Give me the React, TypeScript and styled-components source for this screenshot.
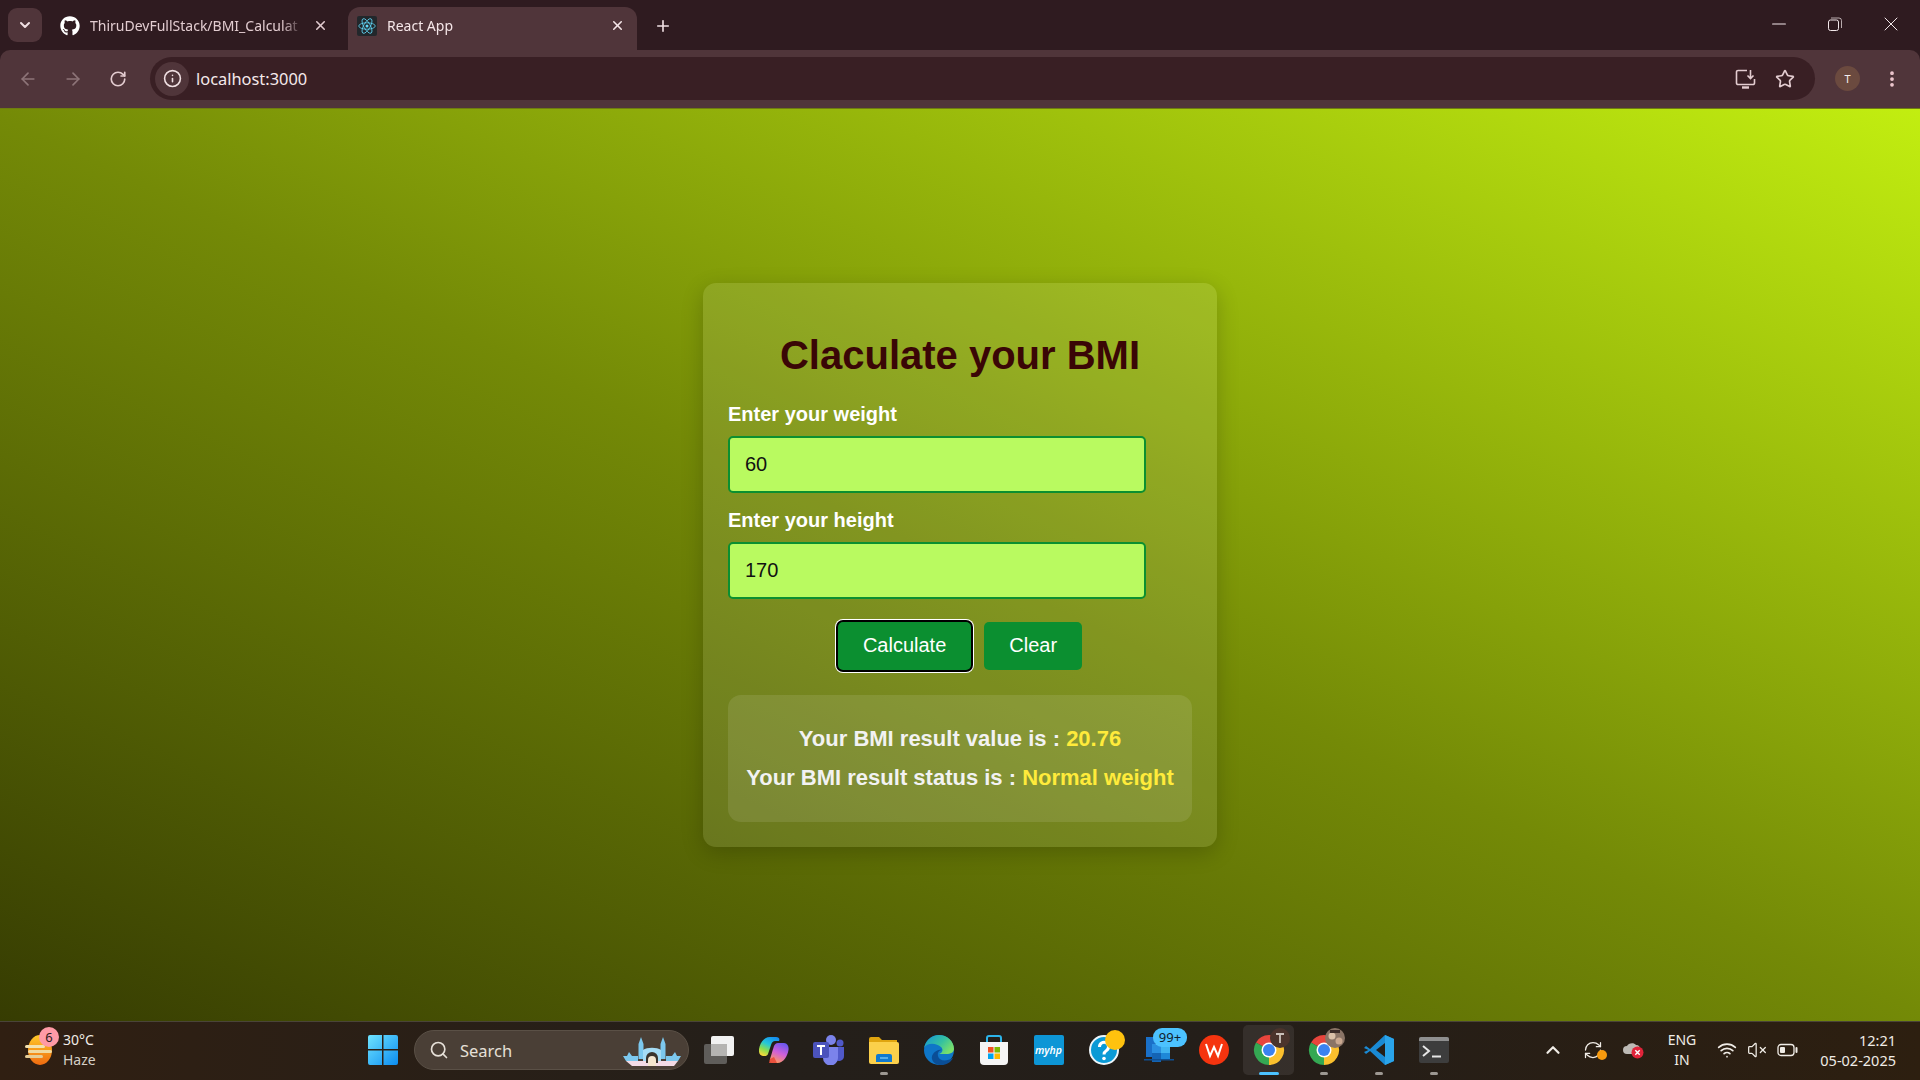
import React from "react";
import styled, { createGlobalStyle } from "styled-components";
import { ArrowLeft, ArrowRight, ChevronDown, ChevronUp, EllipsisVertical, Info, Minus, Plus, RefreshCw, RotateCw, Search, Star, VolumeX, Wifi, X } from "lucide-react";
import { FaGithub } from "react-icons/fa";

const GlobalStyle = createGlobalStyle`
  html, body {
    margin: 0;
    padding: 0;
    height: 100%;
    overflow: hidden;
    background: #2f1b20;
  }
`;

const Screen = styled.div`
  width: 1920px;
  height: 1080px;
  display: flex;
  flex-direction: column;
  font-family: "Noto Sans", "Open Sans", sans-serif;
`;

/* browser chrome */
const TabStrip = styled.div`
  height: 50px;
  flex: none;
  display: flex;
  align-items: flex-end;
  padding-left: 8px;
  background: #2f1b20;
  color: #f0dfe2;
`;

const TabSearch = styled.div`
  width: 34px;
  height: 34px;
  margin: 0 0 8px;
  border-radius: 9px;
  background: #50353a;
  display: flex;
  align-items: center;
  justify-content: center;
`;

const Tab = styled.div<{ $active?: boolean }>`
  width: ${(p) => (p.$active ? "289px" : "306px")};
  height: 43px;
  box-sizing: border-box;
  display: flex;
  align-items: center;
  padding: 0 ${(p) => (p.$active ? "12px" : "20px")} 6px ${(p) => (p.$active ? "9px" : "18px")};
  gap: 10px;
  font-size: 14px;
  border-radius: 12px 12px 0 0;
  background: ${(p) => (p.$active ? "#50353a" : "transparent")};
  color: ${(p) => (p.$active ? "#f5e6e8" : "#e2ccd0")};
`;

const TabTitle = styled.span`
  flex: 1;
  white-space: nowrap;
  mask-image: linear-gradient(to right, #000 90%, transparent);
`;

const Favicon = styled.div`
  width: 20px;
  height: 20px;
  background: #22272b;
  border-radius: 2px;
  display: flex;
  align-items: center;
  justify-content: center;
`;

const NewTab = styled.div`
  width: 52px;
  height: 43px;
  padding-bottom: 6px;
  box-sizing: border-box;
  display: flex;
  align-items: center;
  justify-content: center;
`;

const WindowControls = styled.div`
  margin-left: auto;
  align-self: flex-start;
  display: flex;
  height: 48px;
  align-items: center;
  padding-right: 1px;
`;

const WindowButton = styled.div`
  width: 56px;
  display: flex;
  justify-content: center;
  color: #f3e8ea;
`;

const Toolbar = styled.div`
  height: 58px;
  flex: none;
  display: flex;
  align-items: center;
  padding: 0 0 1px 5px;
  box-sizing: border-box;
  background: #50353a;
  border-radius: 10px 10px 0 0;
  color: #e3ccd0;
`;

const NavButton = styled.div<{ $dim?: boolean }>`
  width: 45px;
  display: flex;
  justify-content: center;
  color: ${(p) => (p.$dim ? "#8d7478" : "#e3ccd0")};
`;

const Omnibox = styled.div`
  width: 1665px;
  height: 43px;
  margin-left: 10px;
  flex: none;
  box-sizing: border-box;
  border-radius: 22px;
  background: #391f24;
  display: flex;
  align-items: center;
  padding: 0 20px 0 5px;
`;

const SiteInfo = styled.div`
  width: 34px;
  height: 34px;
  border-radius: 50%;
  background: #50353a;
  display: flex;
  align-items: center;
  justify-content: center;
`;

const Url = styled.span`
  margin-left: 7px;
  font-size: 16.4px;
  color: #f5e9eb;
`;

const OmniActions = styled.div`
  margin-left: auto;
  display: flex;
  align-items: center;
  gap: 19px;
`;

const Avatar = styled.div`
  width: 25px;
  height: 25px;
  margin-left: 20px;
  border-radius: 50%;
  background: #6b4a3f;
  color: #f4eeee;
  font-size: 11px;
  display: flex;
  align-items: center;
  justify-content: center;
`;

const MenuButton = styled.div`
  margin-left: 22px;
  display: flex;
  color: #f0c9d0;
`;

/* the page itself */
const Page = styled.main`
  flex: 1;
  border-top: 1px solid #6f7d10;
  display: flex;
  align-items: center;
  justify-content: center;
  background: linear-gradient(25deg, #363c02 0%, #748a07 50%, #c2ee10 100%);
  font-family: "Liberation Sans", Arial, sans-serif;
`;

const Card = styled.section`
  width: 514px;
  height: 564px;
  box-sizing: border-box;
  padding: 25px;
  border-radius: 13px;
  background: rgba(255, 255, 255, 0.1);
  box-shadow: 0 6px 22px rgba(0, 0, 0, 0.2);
`;

const Title = styled.h1`
  margin: 24px 0 24px;
  text-align: center;
  font-size: 40px;
  line-height: 46px;
  font-weight: 700;
  color: #3a0606;
`;

const FieldLabel = styled.label`
  display: block;
  font-size: 20px;
  line-height: 24px;
  font-weight: 700;
  color: #fff;
  margin-bottom: 10px;
`;

const FieldInput = styled.input`
  display: block;
  width: 418px;
  height: 57px;
  box-sizing: border-box;
  padding: 0 15px;
  margin-bottom: 15px;
  border: 2px solid #0b8f30;
  border-radius: 5px;
  background: #b9fa60;
  color: #111;
  font-family: inherit;
  font-size: 20px;
  outline: none;
`;

const Buttons = styled.div`
  margin-top: 23px;
  display: flex;
  justify-content: center;
  gap: 13px;
`;

const ActionButton = styled.button<{ $focused?: boolean }>`
  height: 48px;
  padding: 0 25px 2px;
  border: none;
  border-radius: 5px;
  background: #0b8f30;
  color: #fff;
  font-family: inherit;
  font-size: 20px;
  box-shadow: ${(p) => (p.$focused ? "0 0 0 2px #000, 0 0 0 3px #fff" : "none")};
`;

const ResultBox = styled.div`
  margin-top: 25px;
  height: 127px;
  box-sizing: border-box;
  padding-top: 31px;
  border-radius: 13px;
  background: rgba(255, 255, 255, 0.1);
  text-align: center;
`;

const ResultLine = styled.p`
  margin: 0 0 14px;
  font-size: 22px;
  line-height: 25px;
  font-weight: 700;
  color: #f2f2f2;
`;

const ResultValue = styled.span`
  color: #ffeb3b;
`;

/* windows taskbar */
const Taskbar = styled.footer`
  height: 59px;
  flex: none;
  display: flex;
  align-items: center;
  box-sizing: border-box;
  padding-bottom: 2px;
  border-top: 1px solid #4a4438;
  background: linear-gradient(to right, #301f12, #241f1a 40%, #241e19 65%, #2d1f10);
  color: #f0ece6;
`;

const Weather = styled.div`
  width: 355px;
  flex: none;
  box-sizing: border-box;
  padding-left: 24px;
  display: flex;
  align-items: center;
  gap: 9px;
`;

const WeatherIcon = styled.div`
  position: relative;
  width: 30px;
  height: 34px;
`;

const CountBadge = styled.span`
  position: absolute;
  top: -6px;
  left: 15px;
  width: 20px;
  height: 20px;
  border-radius: 50%;
  background: #ff9aa6;
  color: #2b1a1a;
  font-size: 13px;
  display: flex;
  align-items: center;
  justify-content: center;
`;

const WeatherText = styled.div`
  font-size: 14px;
  line-height: 20px;
`;

const WeatherHaze = styled.div`
  color: #d5cfc6;
`;

const Slot = styled.div<{ $active?: boolean; $running?: boolean }>`
  position: relative;
  width: 55px;
  height: 50px;
  flex: none;
  display: flex;
  align-items: center;
  justify-content: center;
  &::before {
    content: "";
    position: absolute;
    inset: 0 2px;
    border-radius: 5px;
    background: ${(p) => (p.$active ? "rgba(255,255,255,0.08)" : "transparent")};
  }
  &::after {
    content: "";
    display: ${(p) => (p.$active || p.$running ? "block" : "none")};
    position: absolute;
    bottom: 0;
    left: 50%;
    transform: translateX(-50%);
    width: ${(p) => (p.$active ? "20px" : "8px")};
    height: 3px;
    border-radius: 2px;
    background: ${(p) => (p.$active ? "#4cc2ff" : "#9d9892")};
  }
`;

const SearchBox = styled.div`
  position: relative;
  width: 275px;
  height: 40px;
  flex: none;
  margin: 0 2px 0 4px;
  box-sizing: border-box;
  border-radius: 20px;
  border: 1px solid #5a5046;
  background: #4a3f36;
  display: flex;
  align-items: center;
  padding-left: 14px;
  gap: 11px;
  font-size: 16.5px;
  color: #e6e0d8;
`;

const Mosque = styled.svg`
  position: absolute;
  right: 7px;
  bottom: 3px;
`;

const IconBadge = styled.span`
  position: absolute;
  top: 3px;
  left: 22px;
  width: 34px;
  height: 19px;
  border-radius: 9px;
  background: #4cc2ff;
  color: #10202c;
  font-size: 13px;
  line-height: 19px;
  text-align: center;
  z-index: 1;
`;

const MyHp = styled.div`
  position: relative;
  width: 30px;
  height: 30px;
  border-radius: 2px;
  background: #0d96d6;
  color: #fff;
  font-size: 10.5px;
  font-style: italic;
  font-weight: 600;
  display: flex;
  align-items: center;
  justify-content: center;
`;

const Tray = styled.div`
  margin-left: auto;
  display: flex;
  align-items: center;
  padding-right: 24px;
`;

const TrayIcon = styled.div<{ $width: number }>`
  position: relative;
  width: ${(p) => p.$width}px;
  display: flex;
  justify-content: center;
`;

const Lang = styled.div`
  width: 44px;
  margin: 0 8px 0 7px;
  text-align: center;
  font-size: 14px;
  line-height: 20px;
`;

const Clock = styled.div`
  width: 88px;
  margin-left: 6px;
  text-align: right;
  font-size: 14.5px;
  line-height: 20px;
`;

const OverflowSvg = styled.svg`
  overflow: visible;
  position: relative;
`;

const ReactLogo = () => (
  <svg width="18" height="18" viewBox="-12 -12 24 24" fill="none" stroke="#61dafb" strokeWidth="1">
    <circle r="2" fill="#61dafb" stroke="none" />
    <ellipse rx="11" ry="4.3" />
    <ellipse rx="11" ry="4.3" transform="rotate(60)" />
    <ellipse rx="11" ry="4.3" transform="rotate(120)" />
  </svg>
);

const RestoreIcon = () => (
  <svg width="14" height="14" viewBox="0 0 14 14" fill="none" stroke="currentColor" strokeWidth="1">
    <rect x="0.5" y="3" width="10" height="10.5" rx="2" />
    <path d="M3 1h8a2.5 2.5 0 0 1 2.5 2.5V11" opacity="0.7" />
  </svg>
);

const InstallIcon = () => (
  <svg width="21" height="20" viewBox="0 0 21 20" fill="none" stroke="currentColor" strokeWidth="1.6">
    <path d="M12 1.5H3A1.5 1.5 0 0 0 1.5 3v11A1.5 1.5 0 0 0 3 15.5h15a1.5 1.5 0 0 0 1.5-1.5V10" />
    <path d="M7 18.5h7" strokeWidth="2.4" />
    <path d="M15.5 1v8M12.5 6.5l3 3 3-3" />
  </svg>
);

const BatteryIcon = () => (
  <svg width="21" height="14" viewBox="0 0 21 14" fill="none" stroke="currentColor" strokeWidth="1.3">
    <rect x="1" y="1.5" width="16" height="11" rx="3" />
    <rect x="3" y="4" width="5" height="6" rx="1" fill="currentColor" stroke="none" />
    <path d="M19.5 5v4" strokeWidth="2" strokeLinecap="round" />
  </svg>
);

const WeatherArt = () => (
  <svg width="30" height="34" viewBox="0 0 30 34">
    <defs>
      <linearGradient id="sun" x1="0" y1="0" x2="0" y2="1">
        <stop offset="0" stopColor="#ffc928" />
        <stop offset="1" stopColor="#ef6a10" />
      </linearGradient>
    </defs>
    <ellipse cx="16" cy="17" rx="12" ry="15" fill="url(#sun)" />
    <rect x="1" y="12" width="20" height="3" rx="1.5" fill="#f3e2ae" />
    <rect x="4" y="17" width="24" height="3" rx="1.5" fill="#f0d9a0" />
    <rect x="1" y="22" width="18" height="3" rx="1.5" fill="#e6cd96" />
  </svg>
);

const WindowsLogo = () => (
  <svg width="30" height="30" viewBox="0 0 30 30">
    <defs>
      <linearGradient id="win" x1="0" y1="0" x2="1" y2="1">
        <stop offset="0" stopColor="#6fe4ff" />
        <stop offset="1" stopColor="#0c8cf0" />
      </linearGradient>
    </defs>
    <path d="M0 2a2 2 0 0 1 2-2h12v14H0zM15.5 0H28a2 2 0 0 1 2 2v12H15.5zM0 15.5h14V30H2a2 2 0 0 1-2-2zM15.5 15.5H30V28a2 2 0 0 1-2 2H15.5z" fill="url(#win)" />
  </svg>
);

const MosqueArt = () => (
  <Mosque width="58" height="30" viewBox="0 0 58 30">
    <path d="M18 1l2.500 7v15h-5V8zM40 1l2.500 7v15h-5V8z" fill="#7cc8ee" />
    <path d="M20 14c4-3 14-3 18 0v11H20z" fill="#a5dcf5" />
    <path d="M0 20h4l2-4 3 4h6v5H3zM58 20h-4l-2-4-3 4h-6v5h12z" fill="#7cc8ee" />
    <path d="M3 25h52l-4 5H9z" fill="#f3dbe6" />
    <path d="M23 27v-5a6 6 0 0 1 12 0v5z" fill="#3a332c" />
    <path d="M25 30v-6a4 4 0 0 1 8 0v6z" fill="#f5e6cf" />
  </Mosque>
);

const TaskViewIcon = () => (
  <svg width="30" height="30" viewBox="0 0 30 30">
    <rect x="0" y="9" width="23" height="20" rx="2" fill="#5f5d5a" />
    <rect x="7" y="1" width="23" height="20" rx="2" fill="#f2f2f2" />
    <rect x="7" y="9" width="16" height="12" fill="#b5b4b2" />
  </svg>
);

const CopilotIcon = () => (
  <svg width="30" height="26" viewBox="0 0 30 26">
    <defs>
      <linearGradient id="copA" x1="0.7" y1="0" x2="0.2" y2="1">
        <stop offset="0" stopColor="#1690f0" />
        <stop offset="0.4" stopColor="#24c8d8" />
        <stop offset="0.7" stopColor="#8ade50" />
        <stop offset="1" stopColor="#ffd83a" />
      </linearGradient>
      <linearGradient id="copB" x1="0.7" y1="0" x2="0.3" y2="1">
        <stop offset="0" stopColor="#6a58f0" />
        <stop offset="0.5" stopColor="#d060d8" />
        <stop offset="1" stopColor="#ff9a5a" />
      </linearGradient>
    </defs>
    <path d="M11 0h6c3 0 4 2 3 4H16c-2 0-3 1-4 4l-3 9c-.5 1.5-2 2-3 2H4c-3 0-4.500-3-4-7C1 6 5 0 11 0z" fill="url(#copA)" />
    <path d="M11 22l4-13c.5-1.500 2-3 4-3h6c3 0 5 3 4.500 7-1 6-5 13-11 13h-5c-2.500 0-3-2-2.500-4z" fill="url(#copB)" />
    <path d="M11 22l-1 4h8l-3-6z" fill="#e84a3a" opacity="0.9" />
  </svg>
);

const TeamsIcon = () => (
  <svg width="32" height="30" viewBox="0 0 32 30">
    <circle cx="18" cy="5" r="5" fill="#7b83eb" />
    <circle cx="27" cy="8" r="3.5" fill="#5059c9" />
    <path d="M22 12h9v9a5 5 0 0 1-9 3z" fill="#5059c9" />
    <path d="M10 12h15v11a7.5 7.5 0 0 1-15 0z" fill="#7b83eb" />
    <rect x="0" y="7" width="16" height="16" rx="2" fill="#4b53bc" />
    <path d="M4 11h8M8 11v9" stroke="#fff" strokeWidth="2" />
  </svg>
);

const FolderIcon = () => (
  <svg width="30" height="28" viewBox="0 0 30 28">
    <path d="M0 3a2 2 0 0 1 2-2h8l3 3h15v6H0z" fill="#e0a50f" />
    <path d="M0 6h28a2 2 0 0 1 2 2v18a2 2 0 0 1-2 2H2a2 2 0 0 1-2-2z" fill="#fbd04b" />
    <path d="M7 26v-6a2 2 0 0 1 2-2h12a2 2 0 0 1 2 2v6z" fill="#1079cf" />
    <path d="M11 22h8" stroke="#6cc0f5" strokeWidth="1.5" />
  </svg>
);

const EdgeIcon = () => (
  <svg width="30" height="30" viewBox="0 0 30 30">
    <defs>
      <linearGradient id="edgeA" x1="0" y1="0" x2="1" y2="0.6">
        <stop offset="0" stopColor="#1494d8" />
        <stop offset="0.6" stopColor="#35c1a0" />
        <stop offset="1" stopColor="#7ae06a" />
      </linearGradient>
    </defs>
    <circle cx="15" cy="15" r="15" fill="#0f76c8" />
    <path d="M0 13C2 5 8 0 15 0c8 0 15 6 15 14 0 3-3 5-8 5h-7c3-1 5-4 2-7-4-4-14-5-17 1z" fill="url(#edgeA)" />
    <path d="M15 30c-6-1-9-7-6-11 2-3 6-5 9-4-2 0-5 2-4 6 1 5 8 6 15 2-2 4-7 8-14 7z" fill="#0a4e96" />
  </svg>
);

const StoreIcon = () => (
  <svg width="30" height="30" viewBox="0 0 30 30">
    <path d="M8 8V3a2 2 0 0 1 2-2h10a2 2 0 0 1 2 2v5" fill="none" stroke="#2cb4ea" strokeWidth="2" />
    <path d="M1 7h28v19a4 4 0 0 1-4 4H5a4 4 0 0 1-4-4z" fill="#f5f5f5" />
    <rect x="9" y="12" width="5.5" height="5.5" fill="#f25022" />
    <rect x="15.5" y="12" width="5.5" height="5.5" fill="#7fba00" />
    <rect x="9" y="18.5" width="5.5" height="5.5" fill="#00a4ef" />
    <rect x="15.5" y="18.5" width="5.5" height="5.5" fill="#ffb900" />
  </svg>
);

const HelpIcon = () => (
  <OverflowSvg width="30" height="30" viewBox="0 0 30 30">
    <circle cx="15" cy="15" r="14" fill="#0a9ad6" stroke="#eef6fa" strokeWidth="2" />
    <path d="M10.5 12a4.500 4.500 0 1 1 7 3.500c-2 1.300-2.500 2-2.500 4" fill="none" stroke="#fff" strokeWidth="3" />
    <circle cx="15" cy="23.500" r="1.800" fill="#fff" />
    <circle cx="26" cy="5" r="10" fill="#ffc20e" />
  </OverflowSvg>
);

const OutlookIcon = () => (
  <svg width="30" height="28" viewBox="0 0 30 28">
    <rect x="2" y="1" width="9" height="20" fill="#1a70c8" />
    <rect x="8" y="8" width="9" height="9" fill="#2a8fe0" />
    <rect x="17" y="8" width="9" height="9" fill="#40b4f0" />
    <rect x="8" y="17" width="9" height="9" fill="#1464b4" />
    <rect x="17" y="17" width="9" height="6" fill="#1e88d8" />
    <path d="M0 23h30v1.5H0z" fill="#0e4f92" />
  </svg>
);

const WpsIcon = () => (
  <svg width="30" height="30" viewBox="0 0 30 30">
    <circle cx="15" cy="15" r="15" fill="#f5340f" />
    <path d="M7 9l4 12 4-9 4 9 4-12" fill="none" stroke="#fff" strokeWidth="2" />
  </svg>
);

const ChromeIcon = ({ badge }: { badge: "letter" | "photo" }) => (
  <OverflowSvg width="30" height="30" viewBox="0 0 30 30">
    <path d="M15 15L2 7.5A15 15 0 0 1 28 7.5z" fill="#e8453c" />
    <path d="M15 15L28 7.5A15 15 0 0 1 15 30z" fill="#fbc02d" />
    <path d="M15 15L15 30A15 15 0 0 1 2 7.5z" fill="#34a853" />
    <circle cx="15" cy="15" r="7.5" fill="#fff" />
    <circle cx="15" cy="15" r="6" fill="#3b82f0" />
    <circle cx="26" cy="3" r="10" fill={badge === "letter" ? "#4b342c" : "#8a7466"} />
    {badge === "letter" ? (
      <path d="M22 -1h8M26 -1v9" stroke="#c9bfb8" strokeWidth="1.8" />
    ) : (
      <>
        <circle cx="23" cy="1" r="3.5" fill="#d9c0a8" />
        <circle cx="30" cy="6" r="3.5" fill="#c9a890" />
        <path d="M21 -5h10v3H21z" fill="#3a2c28" />
      </>
    )}
  </OverflowSvg>
);

const VsCodeIcon = () => (
  <svg width="30" height="30" viewBox="0 0 30 30">
    <path d="M21 0l9 4v22l-9 4L6 16l-4 3-2-2 4.500-2L0 13l2-2 4 3z" fill="#1a8ad4" />
    <path d="M21 0l9 4v22l-9 4z" fill="#2aa4ea" />
    <path d="M21 8l-9 7 9 7z" fill="#241e19" />
  </svg>
);

const TerminalIcon = () => (
  <svg width="30" height="26" viewBox="0 0 30 26">
    <rect width="30" height="26" rx="2" fill="#3d3d3d" />
    <path d="M0 2a2 2 0 0 1 2-2h26a2 2 0 0 1 2 2v2H0z" fill="#8f8f8f" />
    <path d="M4 9l6 5-6 5" fill="none" stroke="#e6e6e6" strokeWidth="2" />
    <path d="M13 19.5h9" stroke="#e6e6e6" strokeWidth="2" />
  </svg>
);

const SyncDot = styled.span`
  position: absolute;
  right: 6px;
  bottom: 0;
  width: 10px;
  height: 10px;
  border-radius: 50%;
  background: #f79a0e;
`;

const CloudIcon = () => (
  <svg width="21" height="18" viewBox="0 0 21 18">
    <path d="M4 13a4 4 0 0 1 0-8c1-3 7-4 9-1 3 0 4 2 4 4v5z" fill="#bdbab5" />
    <circle cx="14.5" cy="11.5" r="6" fill="#e0243a" />
    <path d="M12.3 9.3l4.400 4.400M16.700 9.300l-4.400 4.400" stroke="#fff" strokeWidth="1.4" />
  </svg>
);

const App = () => (
  <Screen>
    <GlobalStyle />
    <TabStrip>
      <TabSearch>
        <ChevronDown size={16} strokeWidth={3} />
      </TabSearch>
      <Tab>
        <FaGithub size={20} color="#fff" />
        <TabTitle>ThiruDevFullStack/BMI_Calculat</TabTitle>
        <X size={15} strokeWidth={2.5} />
      </Tab>
      <Tab $active>
        <Favicon>
          <ReactLogo />
        </Favicon>
        <TabTitle>React App</TabTitle>
        <X size={15} strokeWidth={2.5} />
      </Tab>
      <NewTab>
        <Plus size={18} strokeWidth={2.2} />
      </NewTab>
      <WindowControls>
        <WindowButton>
          <Minus size={22} strokeWidth={1.1} />
        </WindowButton>
        <WindowButton>
          <RestoreIcon />
        </WindowButton>
        <WindowButton>
          <X size={24} strokeWidth={1} />
        </WindowButton>
      </WindowControls>
    </TabStrip>
    <Toolbar>
      <NavButton $dim>
        <ArrowLeft size={20} />
      </NavButton>
      <NavButton $dim>
        <ArrowRight size={20} />
      </NavButton>
      <NavButton>
        <RotateCw size={18} strokeWidth={2.2} />
      </NavButton>
      <Omnibox>
        <SiteInfo>
          <Info size={19} color="#f0dfe2" />
        </SiteInfo>
        <Url>localhost:3000</Url>
        <OmniActions>
          <InstallIcon />
          <Star size={20} strokeWidth={2} />
        </OmniActions>
      </Omnibox>
      <Avatar>T</Avatar>
      <MenuButton>
        <EllipsisVertical size={20} strokeWidth={2.5} />
      </MenuButton>
    </Toolbar>

    <Page>
      <Card>
        <Title>Claculate your BMI</Title>
        <FieldLabel>Enter your weight</FieldLabel>
        <FieldInput defaultValue="60" />
        <FieldLabel>Enter your height</FieldLabel>
        <FieldInput defaultValue="170" />
        <Buttons>
          <ActionButton $focused>Calculate</ActionButton>
          <ActionButton>Clear</ActionButton>
        </Buttons>
        <ResultBox>
          <ResultLine>
            Your BMI result value is : <ResultValue>20.76</ResultValue>
          </ResultLine>
          <ResultLine>
            Your BMI result status is : <ResultValue>Normal weight</ResultValue>
          </ResultLine>
        </ResultBox>
      </Card>
    </Page>

    <Taskbar>
      <Weather>
        <WeatherIcon>
          <WeatherArt />
          <CountBadge>6</CountBadge>
        </WeatherIcon>
        <WeatherText>
          30°C
          <WeatherHaze>Haze</WeatherHaze>
        </WeatherText>
      </Weather>
      <Slot>
        <WindowsLogo />
      </Slot>
      <SearchBox>
        <Search size={20} />
        Search
        <MosqueArt />
      </SearchBox>
      <Slot>
        <TaskViewIcon />
      </Slot>
      <Slot>
        <CopilotIcon />
      </Slot>
      <Slot>
        <TeamsIcon />
      </Slot>
      <Slot $running>
        <FolderIcon />
      </Slot>
      <Slot>
        <EdgeIcon />
      </Slot>
      <Slot>
        <StoreIcon />
      </Slot>
      <Slot>
        <MyHp>myhp</MyHp>
      </Slot>
      <Slot>
        <HelpIcon />
      </Slot>
      <Slot>
        <OutlookIcon />
        <IconBadge>99+</IconBadge>
      </Slot>
      <Slot>
        <WpsIcon />
      </Slot>
      <Slot $active>
        <ChromeIcon badge="letter" />
      </Slot>
      <Slot $running>
        <ChromeIcon badge="photo" />
      </Slot>
      <Slot $running>
        <VsCodeIcon />
      </Slot>
      <Slot $running>
        <TerminalIcon />
      </Slot>
      <Tray>
        <TrayIcon $width={40}>
          <ChevronUp size={22} strokeWidth={2.4} />
        </TrayIcon>
        <TrayIcon $width={40}>
          <RefreshCw size={20} strokeWidth={1.5} />
          <SyncDot />
        </TrayIcon>
        <TrayIcon $width={40}>
          <CloudIcon />
        </TrayIcon>
        <Lang>
          ENG
          <br />
          IN
        </Lang>
        <TrayIcon $width={30}>
          <Wifi size={20} />
        </TrayIcon>
        <TrayIcon $width={30}>
          <VolumeX size={20} strokeWidth={1.5} />
        </TrayIcon>
        <TrayIcon $width={30}>
          <BatteryIcon />
        </TrayIcon>
        <Clock>
          12:21
          <br />
          05-02-2025
        </Clock>
      </Tray>
    </Taskbar>
  </Screen>
);

export default App;
